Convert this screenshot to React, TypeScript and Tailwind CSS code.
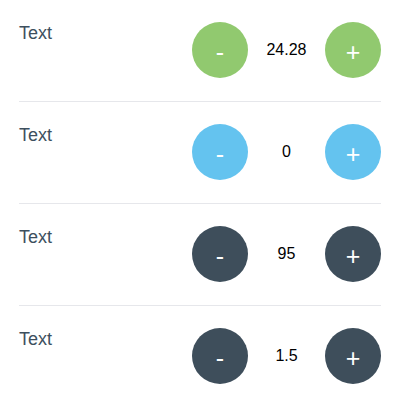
import { useState } from 'react'

interface Counter {
    label: string
    value: number
    tone: 'green' | 'blue' | 'dark'
}

const toneClass = {
    green: 'bg-[#91c96f]',
    blue: 'bg-[#64c3ef]',
    dark: 'bg-[#3e4e5b]',
}

const RoundButton = ({ symbol, tone, onClick }: { symbol: string, tone: Counter['tone'], onClick: () => void }) => {
    return (
        <button
            onClick={onClick}
            className={`w-14 h-14 rounded-full flex items-center justify-center pt-[4px] text-white text-[25px] leading-none ${toneClass[tone]}`}
        >
            {symbol}
        </button>
    )
}

const CounterRow = ({ counter, onChange }: { counter: Counter, onChange: (delta: number) => void }) => {
    return (
        <div className="flex flex-row items-start justify-between pt-[22px] pb-[23px] border-b border-[#e6e7eb]">
            <div className="text-[18px] leading-[22px] text-[#3d4f5e]">{counter.label}</div>
            <div className="flex flex-row items-center">
                <RoundButton symbol="-" tone={counter.tone} onClick={() => onChange(-1)} />
                <div className="w-[77px] text-center text-[16px] text-black">{counter.value}</div>
                <RoundButton symbol="+" tone={counter.tone} onClick={() => onChange(1)} />
            </div>
        </div>
    )
}

export default function App() {
    const [counters, setCounters] = useState<Counter[]>([
        { label: 'Text', value: 24.28, tone: 'green' },
        { label: 'Text', value: 0, tone: 'blue' },
        { label: 'Text', value: 95, tone: 'dark' },
        { label: 'Text', value: 1.5, tone: 'dark' },
    ])

    const change = (index: number, delta: number) => {
        setCounters(prev => prev.map((c, i) => (
            i === index ? { ...c, value: Math.round((c.value + delta) * 100) / 100 } : c
        )))
    }

    return (
        <div className="w-[400px] h-[406px] bg-white px-[19px] font-['Liberation_Sans',Arial,sans-serif] overflow-hidden">
            {counters.map((c, i) => (
                <div key={i} className={i === counters.length - 1 ? '[&>div]:border-b-0' : ''}>
                    <CounterRow counter={c} onChange={delta => change(i, delta)} />
                </div>
            ))}
        </div>
    )
}
